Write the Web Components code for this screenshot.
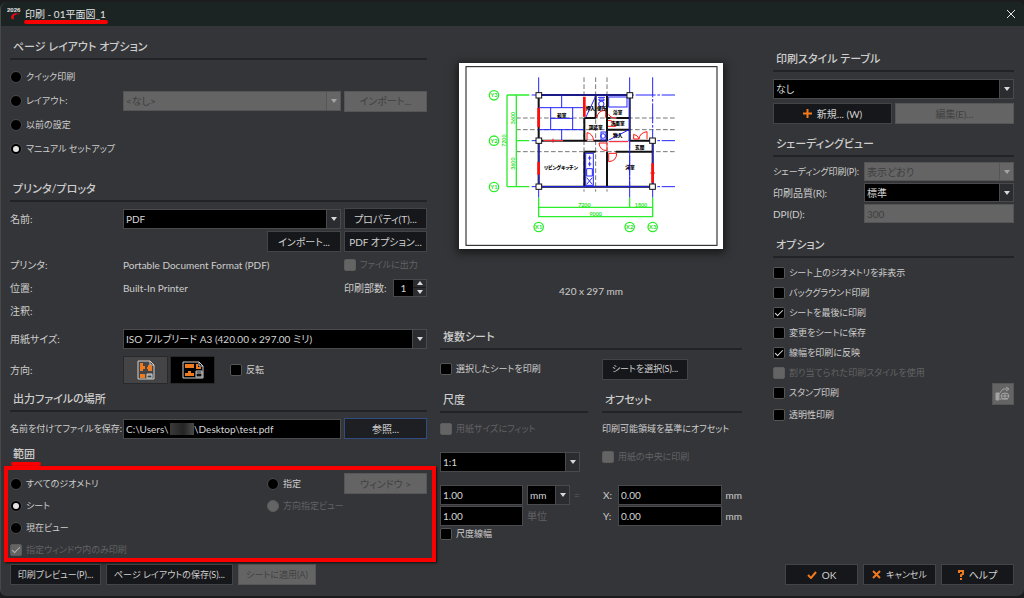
<!DOCTYPE html>
<html lang="ja">
<head>
<meta charset="utf-8">
<title>印刷 - 01平面図_1</title>
<style>
    html, body {
        height: 100%;
    }

    body {
        margin: 0;
        background: #1b1c1e;
        color: #cdcdcd;
        font-family: Lato, "Noto Sans CJK JP", sans-serif;
        font-size: 10px;
        line-height: 16px;
        font-feature-settings: "palt";
    }
</style>
</head>
<body>
<print-dialog></print-dialog>

<script>
function define(name, html, setup) {
    const template = document.createElement('template');
    template.innerHTML = html;
    customElements.define(name, class extends HTMLElement {
        constructor() {
            super();
            this.attachShadow({ mode: 'open' });
            this.shadowRoot.appendChild(template.content.cloneNode(true));
        }
        connectedCallback() {
            if (setup) setup(this, this.shadowRoot);
        }
    });
}

// label shared by the field elements, hidden when there is none
function setLabel(host, root) {
    const label = root.querySelector('label');
    label.textContent = host.getAttribute('label') || '';
    label.hidden = !host.hasAttribute('label');
}

const fieldStyle = `
    *{ box-sizing: border-box; }
    [hidden]{ display: none; }
    :host{ display: flex; align-items: center; min-width: 0; }
    label{ flex: none; width: var(--label, 113px); white-space: nowrap; }
    :host([dense]) label{ font-size: 9px; }
    select, input{
        appearance: none;
        width: 100%;
        min-width: 0;
        height: var(--field, 20px);
        margin: 0;
        padding: 0 2px;
        border: 1px solid #4a4a4c;
        border-radius: 0;
        background: #000;
        color: #d6d6d6;
        font: inherit;
        font-feature-settings: inherit;
        outline: none;
    }
    select:disabled, input:disabled{
        background: #646464;
        border-color: #555;
        color: #3f3f3f;
        opacity: 1;
    }
`;

define('drop-down', `
    <style>
    ${fieldStyle}
    .box{ flex: 1; display: grid; min-width: 0; }
    .box > *{ grid-area: 1 / 1; }
    .arrow{
        justify-self: end;
        display: flex;
        align-items: center;
        justify-content: center;
        width: 15px;
        border: 1px solid #4a4a4c;
        background: #2b2c2f;
        pointer-events: none;
    }
    .arrow::after{
        content: "";
        border: 3px solid transparent;
        border-top: 4px solid #d8d8d8;
        border-bottom: 0;
    }
    select:disabled + .arrow{ background: #666; border-color: #555; }
    select:disabled + .arrow::after{ border-top-color: #a5a5a5; }
    </style>
    <label for="control"></label>
    <div class="box">
        <select id="control"><option></option></select>
        <span class="arrow"></span>
    </div>
`, (host, root) => {
    setLabel(host, root);
    const select = root.querySelector('select');
    select.options[0].textContent = host.getAttribute('value');
    select.disabled = host.hasAttribute('disabled');
    if (host.title) select.setAttribute('aria-label', host.title);
});

define('text-box', `
    <style>
    ${fieldStyle}
    .box{ flex: 1; min-width: 0; position: relative; display: flex; }
    </style>
    <label for="control"></label>
    <div class="box"><input id="control" type="text"><slot></slot></div>
`, (host, root) => {
    setLabel(host, root);
    const input = root.querySelector('input');
    input.value = host.getAttribute('value');
    input.disabled = host.hasAttribute('disabled');
    if (host.title) input.setAttribute('aria-label', host.title);
});

define('spin-box', `
    <style>
    ${fieldStyle}
    :host{ justify-content: space-between; }
    label{ width: auto; }
    .box{ display: flex; width: 34px; border: 1px solid #4a4a4c; }
    input{ flex: 1; height: 16px; border: 0; text-align: center; }
    .steps{ display: flex; flex-direction: column; width: 13px; background: #2b2c2f; }
    button{ flex: 1; display: flex; align-items: center; justify-content: center; padding: 0; border: 0; background: none; }
    button + button{ border-top: 1px solid #1b1b1d; }
    button::after{ content: ""; border: 3px solid transparent; border-bottom: 4px solid #d8d8d8; border-top: 0; }
    button + button::after{ border-bottom: 0; border-top: 4px solid #d8d8d8; }
    </style>
    <label for="control"></label>
    <div class="box">
        <input id="control" type="text" value="1">
        <div class="steps">
            <button type="button" aria-label="増やす"></button>
            <button type="button" aria-label="減らす"></button>
        </div>
    </div>
`, setLabel);

define('push-button', `
    <style>
    :host{ display: flex; height: 21px; min-width: 0; }
    button{
        flex: 1;
        display: flex;
        align-items: center;
        justify-content: center;
        gap: 5px;
        padding: 0;
        border: 1px solid #434446;
        background: #16171a;
        color: #d0d0d0;
        font: inherit;
        font-feature-settings: inherit;
        white-space: nowrap;
    }
    :host([dense]) button{ font-size: 9px; }
    :host([focused]) button{ border-color: #2f4d80; background: #1e1f22; }
    button:disabled{ background: #646464; border-color: #565656; color: #414141; }
    </style>
    <button type="button"><slot name="icon"></slot><slot></slot></button>
`, (host, root) => {
    root.querySelector('button').disabled = host.hasAttribute('disabled');
    if (host.title) root.querySelector('button').setAttribute('aria-label', host.title);
});

const choiceStyle = `
    :host{ display: flex; align-items: center; min-width: 0; font-size: 9px; }
    label{ display: flex; align-items: center; gap: 4px; white-space: nowrap; }
    input{
        appearance: none;
        box-sizing: border-box;
        display: grid;
        place-content: center;
        flex: none;
        width: 12px;
        height: 12px;
        margin: 0;
        border: 1px solid #555;
        border-radius: 2px;
        background: #000;
    }
    input:disabled{ background: #646464; border-color: #5c5c5c; }
    :host([disabled]) label{ color: #626264; }
`;

define('tick-box', `
    <style>
    ${choiceStyle}
    input:checked::after{
        content: "";
        box-sizing: border-box;
        width: 8px;
        height: 4px;
        border: solid #e0e0e0;
        border-width: 0 0 1px 1px;
        transform: rotate(-45deg);
        margin-bottom: 2px;
    }
    input:disabled:checked::after{ border-color: #b5b5b5; }
    </style>
    <label><input type="checkbox"><slot></slot></label>
`, (host, root) => {
    const input = root.querySelector('input');
    input.checked = host.hasAttribute('checked');
    input.disabled = host.hasAttribute('disabled');
});

define('radio-dot', `
    <style>
    ${choiceStyle}
    input{ border-radius: 50%; border-color: #4a4a4c; }
    input:checked::after{ content: ""; width: 6px; height: 6px; border-radius: 50%; background: #e4e4e4; }
    </style>
    <label><input type="radio"><slot></slot></label>
`, (host, root) => {
    const input = root.querySelector('input');
    input.checked = host.hasAttribute('checked');
    input.disabled = host.hasAttribute('disabled');
});

define('group-title', `
    <style>
    :host{ display: flex; align-items: flex-end; box-sizing: border-box; height: 27px; border-bottom: 2px solid #222327; }
    :host([tall]){ height: 33px; }
    h2{ margin: 0; padding: 0 3px 3px; font-size: 11px; line-height: 16px; font-weight: 500; white-space: nowrap; }
    </style>
    <h2><slot></slot></h2>
`);

define('title-bar', `
    <style>
    :host{ display: flex; align-items: center; gap: 4px; height: 24px; padding: 0 7px 0 6px; background: #1b2423; }
    h1{ margin: 0; font: inherit; color: #e2e2e2; position: relative; }
    h1::after{ content: ""; position: absolute; left: -1px; right: -2px; top: 14px; height: 4px; border-radius: 2px; background: #f80000; }
    button{ margin-left: auto; padding: 0; border: 0; background: none; display: flex; }
    </style>
    <svg width="14" height="14" viewBox="0 0 14 14">
        <text x="0" y="5" font-size="6" font-weight="700" fill="#e8e8e8" font-family="Liberation Sans, sans-serif">2026</text>
        <path d="M4 10 Q5 6 11 6 Q9 7 9 8 Q6 8 7 12 Q4 13 4 10Z" fill="#e00d17"/>
        <path d="M10 7 L13 6 L11 8Z" fill="#a50e12"/>
    </svg>
    <h1><slot></slot></h1>
    <button type="button" aria-label="閉じる">
        <svg width="12" height="12" viewBox="0 0 12 12"><path d="M2 2 L10 10 M10 2 L2 10" stroke="#e6e6e6" fill="none"/></svg>
    </button>
`);

define('plan-preview', `
    <style>
    :host{ display: block; width: 264px; background: #fff; box-shadow: 0 2px 8px 2px #18191b; }
    svg{ display: block; width: 100%; }
    .room{ fill: #000; font-weight: 900; font-size: 14px; }
    .dim{ fill: #1fe01f; font-size: 16px; font-weight: 700; }
    .axis{ fill: #1fe01f; font-size: 17px; font-weight: 700; }
    text{ text-anchor: middle; }
    </style>
    <svg viewBox="14 8 792 558" fill="none">
        <rect x="35" y="19" width="753" height="536" stroke="#111" stroke-width="3"/>
        <g stroke="#777" stroke-width="3" stroke-dasharray="14 7">
            <path d="M389 51V394M424 51V394M458 51V394M185 173H662M185 208H662M185 274H662"/>
        </g>
        <g stroke="#2424ff" stroke-width="3" stroke-dasharray="60 5 8 5">
            <path d="M253 51V412M526 51V412M595 51V412M232 104H662M232 241H662M232 379H662"/>
        </g>
        <g stroke="#2bee2b" stroke-width="4">
            <path d="M158 104H225M158 104V379M158 379H225M186 104V379M186 241H225"/>
            <path d="M253 412V469H595V412M253 441H595M526 412V441"/>
            <circle cx="119" cy="105" r="14"/><circle cx="119" cy="241" r="14"/><circle cx="119" cy="380" r="14"/>
            <circle cx="253" cy="500" r="14"/><circle cx="526" cy="500" r="14"/><circle cx="595" cy="500" r="14"/>
        </g>
        <g stroke="#111" stroke-width="6">
            <path d="M253 104H526V241M253 104V379H595V241M253 241H458M526 241H595M390 173V241M390 173H424M424 104V173M458 104V241M458 173H526M458 208H526M390 274H424M390 274V379M458 274V379M484 274H595"/>
        </g>
        <g stroke="#2424ff" stroke-width="3">
            <path d="M253 104H526M253 241V379H595V241M526 104V379M253 142H389M253 208H389M322 104V142M322 208V241M289 142V208M355 142V208M289 174H355"/>
            <rect x="463" y="110" width="55" height="30"/>
            <path d="M394 172L424 108M462 240L522 209"/>
            <path d="M431 111H452M434 116H449V121H434Z"/><circle cx="441" cy="131" r="8"/>
            <rect x="394" y="279" width="23" height="96"/>
            <path d="M397 325H414V347H397ZM397 352L414 372M414 352L397 372M406 286V300M401 293H411M406 304V318M401 311H411"/>
            <rect x="440" y="215" width="15" height="24"/><circle cx="446" cy="227" r="7"/>
        </g>
        <g fill="#fff" stroke="#fff" stroke-width="3">
            <path d="M268 241H326M398 241H418M463 241H522M468 173H486"/>
        </g>
        <g stroke="#ff1616" stroke-width="3">
            <path d="M268 241H326M296 235V247M463 244H522M398 241V217Q415 219 418 241M428 172Q430 150 454 150V172M463 162Q468 173 486 173M461 198H484Q482 181 461 180M538 236V222Q552 225 554 236ZM554 236Q556 217 578 214V236M434 248H458V271Q436 270 434 248M463 279V304Q487 302 487 279Z"/>
        </g>
        <g stroke="#ff0d0d" stroke-width="8"><path d="M253 142V201M253 305V343M595 309V367M390 109V169"/></g>
        <path d="M588 338H602" stroke="#ff0d0d" stroke-width="3"/>
        <g fill="#fff" stroke="#111" stroke-width="3">
            <rect x="245" y="97" width="17" height="16"/><rect x="518" y="97" width="17" height="16"/>
            <rect x="245" y="233" width="17" height="16"/><rect x="586" y="233" width="17" height="16"/>
            <rect x="245" y="371" width="17" height="16"/><rect x="586" y="371" width="17" height="16"/>
        </g>
        <g class="room">
            <text x="322" y="169">和室</text><text x="408" y="149">押入</text><text x="442" y="149">便所</text>
            <text x="490" y="161">浴室</text><text x="490" y="194">洗面室</text><text x="424" y="207">談話室</text>
            <text x="490" y="229">物入</text><text x="556" y="266">玄関</text>
            <text x="320" y="325">リビングキッチン</text><text x="527" y="325">洋室</text>
        </g>
        <g class="axis">
            <text x="119" y="111">Y3</text><text x="119" y="247">Y2</text><text x="119" y="386">Y1</text>
            <text x="253" y="506">X1</text><text x="526" y="506">X2</text><text x="595" y="506">X3</text>
        </g>
        <g class="dim">
            <text x="390" y="439">7200</text><text x="560" y="439">1800</text><text x="424" y="466">9000</text>
            <text transform="translate(183 173) rotate(-90)">3600</text>
            <text transform="translate(183 310) rotate(-90)">3600</text>
            <text transform="translate(156 241) rotate(-90)">7200</text>
        </g>
    </svg>
`);

define('orient-button', `
    <style>
    :host{ display: flex; width: 45px; height: 28px; }
    button{ flex: 1; display: flex; align-items: center; justify-content: center; padding: 0; border: 1px solid #28292b; background: #444446; }
    :host([selected]) button{ background: #000; }
    </style>
    <button type="button"><slot></slot></button>
`, (host, root) => {
    root.querySelector('button').setAttribute('aria-label', host.title);
});

define('layout-column', `
    <style>
    :host, .row, .radios{ display: flex; }
    :host{ flex-direction: column; min-width: 0; }
    .row{ align-items: center; gap: 3px; height: 23px; }
    .radios{ flex-direction: column; padding: 5px 0 8px; }
    .radios .row{ height: 24px; }
    .grow{ flex: 1; }
    .side{ width: 83px; flex: none; }
    .key{ width: 110px; flex: none; }
    .printer{ padding: 5px 0; }
    .end{ justify-content: flex-end; }
    .import{ width: 74px; }
    .orient{ height: 28px; margin: 6px 0 1px; gap: 2px; }
    .orient tick-box{ margin-left: 13px; }
    .orient .key{ width: 111px; }
    .file{ margin-top: 5px; }
    .smudge{
        position: absolute;
        left: 47px;
        top: 4px;
        width: 24px;
        height: 12px;
        background: linear-gradient(90deg, #3a3a3a, #242424 55%, #4a4a4a);
    }
    h2{ margin: 2px 0 0; padding-left: 3px; font-size: 11px; line-height: 24px; font-weight: 500; height: 24px; }
    h2 span{ position: relative; }
    h2 span::after{ content: ""; position: absolute; left: -2px; right: -6px; top: 15px; height: 4px; border-radius: 2px; background: #f80000; }
    .range{ position: relative; display: grid; grid-template-columns: 257fr 74fr 86px; padding: 7px 0 1px; }
    .range > *{ height: 22px; }
    .range .window{ height: 21px; width: 83px; justify-self: end; }
    .range .wide{ grid-column: 2 / 4; }
    .range::after{
        content: "";
        position: absolute;
        inset: 0 -9px 0 -6px;
        border: 4px solid #fb0000;
        box-shadow: 1px 1px 2px #111;
        pointer-events: none;
    }
    .range .last{ grid-column: 1 / 4; }
    </style>
    <group-title tall>ページ レイアウト オプション</group-title>
    <div class="radios">
        <div class="row"><radio-dot>クイック印刷</radio-dot></div>
        <div class="row">
            <radio-dot class="key">レイアウト:</radio-dot>
            <drop-down class="grow" title="レイアウト" value="&lt;なし&gt;" disabled></drop-down>
            <push-button class="side" disabled>インポート...</push-button>
        </div>
        <div class="row"><radio-dot>以前の設定</radio-dot></div>
        <div class="row"><radio-dot checked>マニュアル セットアップ</radio-dot></div>
    </div>
    <group-title tall>プリンタ/プロッタ</group-title>
    <div class="printer">
        <div class="row">
            <drop-down class="grow" label="名前:" value="PDF"></drop-down>
            <push-button class="side">プロパティ(T)...</push-button>
        </div>
        <div class="row end">
            <push-button class="import">インポート...</push-button>
            <push-button class="side">PDF オプション...</push-button>
        </div>
        <div class="row">
            <span class="key">プリンタ:</span><span class="grow">Portable Document Format (PDF)</span>
            <tick-box class="side" disabled>ファイルに出力</tick-box>
        </div>
        <div class="row">
            <span class="key">位置:</span><span class="grow">Built-In Printer</span>
            <spin-box class="side" label="印刷部数:"></spin-box>
        </div>
        <div class="row"><span class="key">注釈:</span></div>
    </div>
    <div class="row"><drop-down class="grow" label="用紙サイズ:" value="ISO フルブリード A3 (420.00 x 297.00 ミリ)"></drop-down></div>
    <div class="row orient">
        <span class="key">方向:</span>
        <orient-button title="縦">
            <svg width="18" height="20" viewBox="0 0 18 20" fill="none">
                <path d="M1 1H13L17 5V19H1Z" stroke="#d0d0d0"/><path d="M13 1V5H17" stroke="#d0d0d0"/>
                <path d="M3 3H6V6H8V9H6V11H3ZM11 5H15V11H11V9H10V7H11ZM3 14H8V18H3Z" fill="#f07a1e"/>
                <path d="M10 18V14H15V18Z" fill="#444" stroke="#d0d0d0"/><path d="M10 15H15" stroke="#d0d0d0"/>
            </svg>
        </orient-button>
        <orient-button title="横" selected>
            <svg width="22" height="18" viewBox="0 0 22 18" fill="none">
                <path d="M1 1H17L21 5V17H1Z" stroke="#d0d0d0"/><path d="M17 1V5H21" stroke="#d0d0d0"/>
                <path d="M3 3H12V7H3ZM14 3H16V6H19V8H14ZM6 10H9V12H12V15H3V12H6Z" fill="#f07a1e"/>
                <path d="M14 16V10H20V16Z" fill="#111" stroke="#d0d0d0"/><path d="M14 12H20" stroke="#d0d0d0"/>
            </svg>
        </orient-button>
        <tick-box>反転</tick-box>
    </div>
    <group-title>出力ファイルの場所</group-title>
    <div class="row file">
        <text-box class="grow" dense label="名前を付けてファイルを保存:" value="C:\\Users\\&nbsp;&nbsp;&nbsp;&nbsp;&nbsp;&nbsp;&nbsp;&nbsp;&nbsp;&nbsp;\\Desktop\\test.pdf"><span class="smudge"></span></text-box>
        <push-button class="side" focused>参照...</push-button>
    </div>
    <h2><span>範囲</span></h2>
    <div class="range">
        <radio-dot>すべてのジオメトリ</radio-dot>
        <radio-dot>指定</radio-dot>
        <push-button class="window" disabled>ウィンドウ &gt;</push-button>
        <radio-dot checked>シート</radio-dot>
        <radio-dot class="wide" disabled>方向指定ビュー</radio-dot>
        <radio-dot class="last">現在ビュー</radio-dot>
        <tick-box class="last" checked disabled>指定ウィンドウ内のみ印刷</tick-box>
    </div>
`);

define('preview-column', `
    <style>
    :host{ display: flex; flex-direction: column; min-width: 0; }
    plan-preview{ align-self: center; margin-top: 36px; }
    .size{ margin: 34px 0 0; height: 40px; text-align: center; }
    .pair{ display: grid; grid-template-columns: 148fr 140fr; column-gap: 14px; }
    .pair > div{ min-width: 0; }
    .sheets{ height: 34px; align-items: center; padding-top: 2px; }
    .sheets push-button{ width: 86px; }
    .row{ display: flex; align-items: center; gap: 4px; height: 21px; white-space: nowrap; }
    .first{ height: 22px; margin-top: 5px; }
    .note{ font-size: 9px; }
    .ratio{ margin: 12px 8px 12px 0; }
    .center{ margin: 6px 0 17px; }
    .value{ width: 83px; flex: none; }
    .unit{ width: 43px; flex: none; }
    .dim{ color: #626264; }
    .offset{ flex: 1; --label: 15px; padding-left: 1px; }
    .line{ height: 16px; }
    </style>
    <plan-preview></plan-preview>
    <p class="size">420 x 297 mm</p>
    <group-title>複数シート</group-title>
    <div class="pair sheets">
        <tick-box>選択したシートを印刷</tick-box>
        <push-button dense>シートを選択(S)...</push-button>
    </div>
    <div class="pair">
        <div>
            <group-title>尺度</group-title>
            <div class="row first"><tick-box disabled>用紙サイズにフィット</tick-box></div>
            <drop-down class="ratio" title="尺度" value="1:1"></drop-down>
            <div class="row">
                <text-box class="value" title="用紙" value="1.00"></text-box>
                <drop-down class="unit" title="用紙の単位" value="mm"></drop-down>
                <span class="dim">=</span>
            </div>
            <div class="row">
                <text-box class="value" title="図面" value="1.00"></text-box>
                <span class="dim">単位</span>
            </div>
            <div class="row line"><tick-box>尺度線幅</tick-box></div>
        </div>
        <div>
            <group-title>オフセット</group-title>
            <div class="row first note">印刷可能領域を基準にオフセット</div>
            <div class="row center"><tick-box disabled>用紙の中央に印刷</tick-box></div>
            <div class="row"><text-box class="offset" label="X:" value="0.00"></text-box>mm</div>
            <div class="row"><text-box class="offset" label="Y:" value="0.00"></text-box>mm</div>
        </div>
    </div>
`);

define('options-column', `
    <style>
    :host{ display: flex; flex-direction: column; min-width: 0; padding-top: 12px; }
    .style{ margin: 7px 0 4px; }
    .buttons{ display: grid; grid-template-columns: 1fr 1fr; gap: 3px; margin-bottom: 6px; }
    .shade{ display: grid; row-gap: 2px; padding: 5px 0 8px; --label: 91px; --field: 19px; }
    .options{ display: grid; grid-template-columns: 1fr 22px; padding-top: 5px; }
    .options > *{ height: 20px; }
    .options tick-box{ grid-column: 1; }
    .options push-button{ grid-area: 7 / 2; height: 22px; }
    </style>
    <group-title tall>印刷スタイル テーブル</group-title>
    <drop-down class="style" title="印刷スタイル テーブル" value="なし"></drop-down>
    <div class="buttons">
        <push-button>
            <svg slot="icon" width="9" height="9" viewBox="0 0 9 9"><path d="M4.5 0V9M0 4.5H9" stroke="#f07a1e" stroke-width="2"/></svg>新規... (W)
        </push-button>
        <push-button disabled>編集(E)...</push-button>
    </div>
    <group-title>シェーディングビュー</group-title>
    <div class="shade">
        <drop-down dense label="シェーディング印刷(P):" value="表示どおり" disabled></drop-down>
        <drop-down label="印刷品質(R):" value="標準"></drop-down>
        <text-box label="DPI(D):" value="300" disabled></text-box>
    </div>
    <group-title>オプション</group-title>
    <div class="options">
        <tick-box>シート上のジオメトリを非表示</tick-box>
        <tick-box>バックグラウンド印刷</tick-box>
        <tick-box checked>シートを最後に印刷</tick-box>
        <tick-box>変更をシートに保存</tick-box>
        <tick-box checked>線幅を印刷に反映</tick-box>
        <tick-box disabled>割り当てられた印刷スタイルを使用</tick-box>
        <tick-box>スタンプ印刷</tick-box>
        <tick-box>透明性印刷</tick-box>
        <push-button title="スタンプ設定" disabled>
            <svg slot="icon" width="16" height="16" viewBox="0 0 16 16" fill="none" stroke="#a2a2a2">
                <path d="M1 7H4V14H1Z" fill="#a2a2a2"/><path d="M4 8L8 3H13M11 1L14 3L11 5"/>
                <ellipse cx="10" cy="10" rx="4" ry="3"/><path d="M6 10H14M10 7V13M5 13H13"/>
            </svg>
        </push-button>
    </div>
`);

define('print-dialog', `
    <style>
    :host{ display: block; padding-top: 2px; }
    form{ margin: 0; border-left: 1px solid #47484a; border-radius: 7px; background: #343538; overflow: hidden; }
    .columns, footer, .done{ display: grid; }
    .columns{ grid-template-columns: minmax(0, 417fr) minmax(0, 315fr) minmax(0, 272fr); padding: 1px 10px 0 9px; }
    preview-column{ margin-left: 13px; }
    options-column{ margin-left: 31px; }
    footer{ grid-template-columns: 91px 127px 78px 1fr; gap: 5px; padding: 2px 10px 11px 9px; }
    .done{ grid-template-columns: 73px 73px 73px; gap: 5px; justify-content: end; }
    </style>
    <form>
        <title-bar>印刷 - 01平面図_1</title-bar>
        <div class="columns">
            <layout-column></layout-column>
            <preview-column></preview-column>
            <options-column></options-column>
        </div>
        <footer>
            <push-button dense>印刷プレビュー(P)...</push-button>
            <push-button dense>ページ レイアウトの保存(S)...</push-button>
            <push-button dense disabled>シートに適用(A)</push-button>
            <div class="done">
                <push-button><svg slot="icon" width="10" height="8" viewBox="0 0 10 8"><path d="M1 4L4 7L9 1" fill="none" stroke="#f07a1e" stroke-width="2"/></svg>OK</push-button>
                <push-button dense><svg slot="icon" width="9" height="9" viewBox="0 0 9 9"><path d="M1 1L8 8M8 1L1 8" stroke="#f07a1e" stroke-width="2"/></svg>キャンセル</push-button>
                <push-button><svg slot="icon" width="6" height="10" viewBox="0 0 6 10"><path d="M1 3V1H5V4L3 5V7M3 8V10" fill="none" stroke="#f07a1e" stroke-width="2"/></svg>ヘルプ</push-button>
            </div>
        </footer>
    </form>
`);
</script>
</body>
</html>
